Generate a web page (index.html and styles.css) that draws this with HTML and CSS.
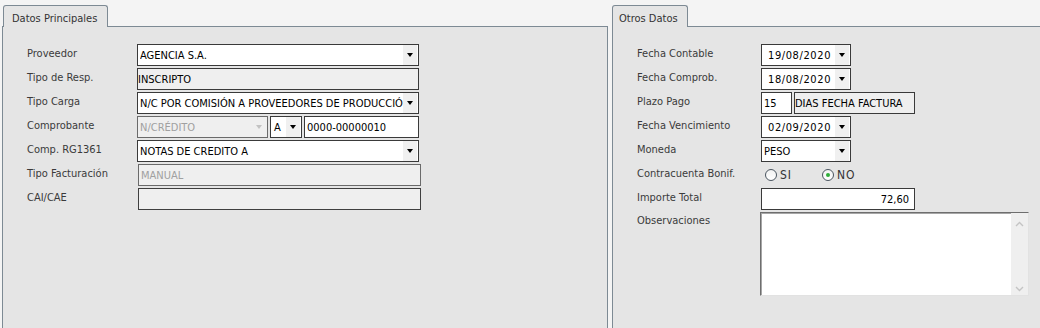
FILE: index.html
```html
<!DOCTYPE html>
<html lang="es">
<head>
<meta charset="utf-8">
<title>Comprobante</title>
<link rel="stylesheet" href="styles.css">
</head>
<body>
<div class="screen">
  <section class="panel panel-left">
    <div class="tabbar"><div class="tab tab-left">Datos Principales</div></div>
    <div class="panel-body">
      <div class="form form-left">
        <div class="label">Proveedor</div>
        <div class="field select w-282"><span class="val">AGENCIA S.A.</span><span class="btn"><i class="tri"></i></span></div>

        <div class="label">Tipo de Resp.</div>
        <div class="field ro w-282 tight"><span class="val">INSCRIPTO</span></div>

        <div class="label">Tipo Carga</div>
        <div class="field select w-282"><span class="val">N/C POR COMISIÓN A PROVEEDORES DE PRODUCCIÓN</span><span class="btn"><i class="tri"></i></span></div>

        <div class="label">Comprobante</div>
        <div class="group">
          <div class="field select disabled w-131"><span class="val">N/CRÉDITO</span><span class="btn"><i class="tri"></i></span></div>
          <div class="field select w-32"><span class="val">A</span><span class="btn"><i class="tri"></i></span></div>
          <div class="field w-115"><span class="val">0000-00000010</span></div>
        </div>

        <div class="label">Comp. RG1361</div>
        <div class="field select w-282"><span class="val">NOTAS DE CREDITO A</span><span class="btn"><i class="tri"></i></span></div>

        <div class="label">Tipo Facturación</div>
        <div class="field ro disabled w-283 shift"><span class="val">MANUAL</span></div>

        <div class="label">CAI/CAE</div>
        <div class="field ro w-283 shift"><span class="val"></span></div>
      </div>
    </div>
  </section>

  <section class="panel panel-right">
    <div class="tabbar"><div class="tab tab-right">Otros Datos</div></div>
    <div class="panel-body">
      <div class="form form-right">
        <div class="label">Fecha Contable</div>
        <div class="field select date w-90"><span class="val">19/08/2020</span><span class="btn"><i class="tri"></i></span></div>

        <div class="label">Fecha Comprob.</div>
        <div class="field select date w-90"><span class="val">18/08/2020</span><span class="btn"><i class="tri"></i></span></div>

        <div class="label">Plazo Pago</div>
        <div class="group">
          <div class="field w-31"><span class="val">15</span></div>
          <div class="field ro w-121 tight"><span class="val">DIAS FECHA FACTURA</span></div>
        </div>

        <div class="label">Fecha Vencimiento</div>
        <div class="field select date w-90"><span class="val">02/09/2020</span><span class="btn"><i class="tri"></i></span></div>

        <div class="label">Moneda</div>
        <div class="field select w-90"><span class="val">PESO</span><span class="btn"><i class="tri"></i></span></div>

        <div class="label">Contracuenta Bonif.</div>
        <div class="radios">
          <label class="radio"><span class="dot"></span><span class="rtext">SI</span></label>
          <label class="radio checked"><span class="dot"></span><span class="rtext">NO</span></label>
        </div>

        <div class="label">Importe Total</div>
        <div class="field num w-154"><span class="val">72,60</span></div>

        <div class="label label-top">Observaciones</div>
        <div class="memo">
          <div class="memo-text"></div>
          <div class="scroll">
            <svg class="chev" width="9" height="6" viewBox="0 0 9 6"><path d="M1 5 L4.5 1.5 L8 5" fill="none" stroke="#c4c4c4" stroke-width="1.4"/></svg>
            <svg class="chev" width="9" height="6" viewBox="0 0 9 6"><path d="M1 1 L4.5 4.5 L8 1" fill="none" stroke="#c4c4c4" stroke-width="1.4"/></svg>
          </div>
        </div>
      </div>
    </div>
  </section>
</div>
</body>
</html>
```

FILE: styles.css
```css
* { box-sizing: border-box; }

html, body {
  margin: 0;
  padding: 0;
}

body {
  width: 1040px;
  height: 328px;
  overflow: hidden;
  background: #f4f4f4;
  font-family: "DejaVu Sans Condensed", "DejaVu Sans", sans-serif;
  font-size: 11px;
  color: #333;
}

.screen {
  display: flex;
  height: 328px;
  padding-left: 2px;
  gap: 4px;
}

.panel {
  display: flex;
  flex-direction: column;
}

.panel-left { width: 606px; flex: none; }
.panel-right { flex: 1; margin-right: -10px; }

.tabbar {
  height: 26px;
  display: flex;
  align-items: flex-end;
}

.tab {
  position: relative;
  z-index: 1;
  height: 22px;
  margin-bottom: -1px;
  background: #e5e5e5;
  border: 1px solid #7d8a94;
  border-bottom: none;
  border-radius: 3px 3px 0 0;
  color: #333;
  line-height: 15px;
  padding-top: 5px;
}

.tab-left { width: 105px; margin-left: 1px; padding-left: 8px; }
.tab-right { width: 76px; padding-left: 6px; }

.panel-body {
  flex: 1;
  background: #e5e5e5;
  border-top: 1px solid #7d8a94;
  border-left: 1px solid #7d8a94;
  border-right: 1px solid #7d8a94;
}

.form {
  display: grid;
  grid-auto-rows: 22px;
  row-gap: 2px;
  padding-top: 17px;
  padding-left: 24px;
  align-items: center;
}

.form-left { grid-template-columns: 110px auto; }
.form-right { grid-template-columns: 124px auto; }

.label {
  color: #3a3a3a;
  line-height: 12px;
  margin-top: -3px;
}

.label-top { align-self: start; margin-top: 3px; }

.group {
  display: flex;
  gap: 2px;
}

.field {
  height: 22px;
  display: flex;
  align-items: center;
  background: #fff;
  border: 1px solid #3a3a3a;
  color: #000;
  padding-left: 2px;
  overflow: hidden;
  white-space: nowrap;
}

.field .val {
  flex: 1;
  overflow: hidden;
  line-height: 14px;
  padding-top: 1px;
}

.field.ro { background: #efefef; }
.field.tight { padding-left: 0; }
.field.shift { margin-left: 1px; border-color: #3f3f3f; }
.field.disabled { background: #efefef; color: #a0a0a0; border-color: #6a6a6a; }
.field.num .val { text-align: right; padding-right: 5px; }
.field.date { padding-left: 6px; }
.field.date .val { letter-spacing: 0.6px; }

.btn {
  flex: none;
  width: 14px;
  height: 20px;
  margin-right: 1px;
  background: #f0f0f0;
  display: flex;
  align-items: center;
  justify-content: center;
}

.tri {
  width: 0;
  height: 0;
  border-left: 3.5px solid transparent;
  border-right: 3.5px solid transparent;
  border-top: 4px solid #000;
}

.disabled .btn { background: transparent; }
.disabled .tri { border-top-color: #c2c2c2; }

.w-282 { width: 282px; }
.w-283 { width: 283px; }
.w-131 { width: 131px; }
.w-32 { width: 32px; }
.w-115 { width: 115px; }
.w-90 { width: 90px; }
.w-31 { width: 31px; }
.w-121 { width: 121px; }
.w-154 { width: 154px; }

.group .w-32 .val { padding-left: 1px; }

.radios {
  display: flex;
  align-items: center;
  padding-left: 4px;
  gap: 30px;
}

.radio {
  display: flex;
  align-items: center;
  gap: 3px;
  color: #333;
  font-size: 12px;
}

.dot {
  width: 12px;
  height: 12px;
  border-radius: 50%;
  border: 1px solid #4a5560;
  background: linear-gradient(#f2f2f2, #fff);
  display: flex;
  align-items: center;
  justify-content: center;
}

.radio.checked .dot::after {
  content: "";
  width: 4px;
  height: 4px;
  border-radius: 50%;
  background: #2fae3a;
}

.rtext { line-height: 14px; letter-spacing: 1px; }

.memo {
  align-self: start;
  margin-left: -1px;
  width: 269px;
  height: 84px;
  display: flex;
  background: #fff;
  border: 1px solid;
  border-color: #6e6e6e #e2e2e2 #e2e2e2 #6e6e6e;
  box-shadow: inset 1px 1px 0 #a6a6a6;
}

.memo-text { flex: 1; }

.scroll {
  width: 17px;
  background: #efefef;
  display: flex;
  flex-direction: column;
  justify-content: space-between;
  align-items: center;
  padding: 8px 0 3px;
}
```
